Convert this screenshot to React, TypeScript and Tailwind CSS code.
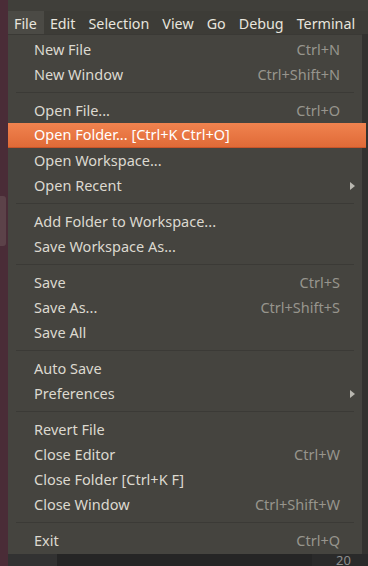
const font = { fontFamily: '"Noto Sans", "DejaVu Sans", sans-serif' };

type Item = { label: string; shortcut?: string; sub?: boolean; active?: boolean };

const groups: Item[][] = [
  [
    { label: "New File", shortcut: "Ctrl+N" },
    { label: "New Window", shortcut: "Ctrl+Shift+N" },
  ],
  [
    { label: "Open File...", shortcut: "Ctrl+O" },
    { label: "Open Folder... [Ctrl+K Ctrl+O]", active: true },
    { label: "Open Workspace..." },
    { label: "Open Recent", sub: true },
  ],
  [{ label: "Add Folder to Workspace..." }, { label: "Save Workspace As..." }],
  [
    { label: "Save", shortcut: "Ctrl+S" },
    { label: "Save As...", shortcut: "Ctrl+Shift+S" },
    { label: "Save All" },
  ],
  [{ label: "Auto Save" }, { label: "Preferences", sub: true }],
  [
    { label: "Revert File" },
    { label: "Close Editor", shortcut: "Ctrl+W" },
    { label: "Close Folder [Ctrl+K F]" },
    { label: "Close Window", shortcut: "Ctrl+Shift+W" },
  ],
  [{ label: "Exit", shortcut: "Ctrl+Q" }],
];

const menus = ["File", "Edit", "Selection", "View", "Go", "Debug", "Terminal"];

const MenuRow = ({ item }: { item: Item }) => (
  <div
    className={
      item.active
        ? "relative flex items-center h-[25px] pl-[26px] pr-[26px] bg-gradient-to-b from-[#f0834f] to-[#e06a37] text-white border-b border-[#c8552a] -mr-[4px]"
        : "flex items-center h-[25px] pl-[26px] pr-[22px] text-[#dcd9d0]"
    }
  >
    <span className="flex-1 whitespace-nowrap">{item.label}</span>
    {item.shortcut && <span className="text-[#97958d]">{item.shortcut}</span>}
    {item.sub && (
      <svg width="5" height="8" viewBox="0 0 5 8" className="-mr-[15px]">
        <path d="M0 0 L5 4 L0 8 Z" fill="#b9b7b0" />
      </svg>
    )}
  </div>
);

export default function App() {
  return (
    <div className="flex w-[368px] h-[566px] overflow-hidden bg-[#2b2b2b] text-[14.5px]" style={font}>
      {/* left strip: window behind */}
      <div className="w-[8px] shrink-0 h-full bg-[#4a2c37] flex flex-col">
        <div className="h-[196px]" />
        <div className="h-[50px] w-[6px] rounded-r-[3px] bg-[#5c4249]" />
      </div>
      <div className="flex-1 min-w-0 flex flex-col">
        <div className="h-[14px] bg-[#403f3a]" />
        <div className="h-[23px] flex items-center bg-[#3d3c37] text-[#e8e5de] text-[14.3px] whitespace-nowrap">
          {menus.map((m, i) => (
            <div
              key={m}
              className={
                i === 0
                  ? "h-full flex items-center pt-[2px] pl-[6px] pr-[7px] bg-[#4b4a45]"
                  : "h-full flex items-center pt-[2px] pl-[6px] pr-[7px]"
              }
            >
              {m}
            </div>
          ))}
        </div>
        <div className="flex">
          <div className="w-[354px] shrink-0 bg-[#45443f] border-t border-[#3a3935] pt-[2px] pb-[1px]">
            {groups.map((g, gi) => (
              <div key={gi}>
                {gi > 0 && <div className="mx-[8px] my-[5px] h-px bg-[#3b3a36]" />}
                {g.map((it) => (
                  <MenuRow key={it.label} item={it} />
                ))}
              </div>
            ))}
          </div>
          <div className="flex-1 bg-[#33322f]" />
        </div>
        <div className="flex-1 flex bg-[#252525] text-[#8f8f8f] text-[13px]">
          <div className="w-[49px] bg-[#323232]" />
          <div className="flex-1" />
          <div className="w-[56px] bg-[#2a2a2a] leading-[12px] pl-[24px] overflow-hidden">20</div>
        </div>
      </div>
    </div>
  );
}
